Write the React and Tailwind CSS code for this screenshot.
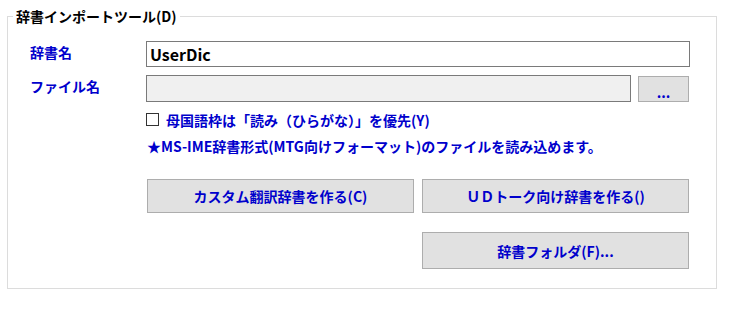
import React from "react";

const font = { fontFamily: '"Noto Sans CJK JP", "Noto Sans", sans-serif' };

function Btn({ children, className = "" }) {
  return (
    <button
      className={`flex items-center justify-center bg-[#e1e1e1] border border-[#adadad] text-[#0000cc] font-bold text-[14px] leading-none ${className}`}
    >
      {children}
    </button>
  );
}

export default function App() {
  return (
    <div className="w-[740px] h-[314px] bg-white relative overflow-hidden" style={font}>
      <fieldset className="ml-[7px] mt-[6px] w-[710px] h-[283px] border border-[#dcdcdc] px-0 pb-0">
        <legend className="ml-[5px] px-[3px] text-[14px] leading-[20px] font-bold text-black">
          辞書インポートツール(D)
        </legend>
        <div className="pl-[22px] pt-[15px] flex flex-col">
          <div className="flex items-start h-[26px]">
            <div className="w-[116px] text-[14px] font-bold text-[#0000cc] leading-[20px] mt-[1px]">辞書名</div>
            <div className="w-[544px] h-[26px] border border-[#7a7a7a] bg-white flex items-center pl-[3px] text-[16px] font-bold text-black">
              UserDic
            </div>
          </div>
          <div className="flex items-start mt-[8px] h-[27px]">
            <div className="w-[116px] text-[14px] font-bold text-[#0000cc] leading-[20px] mt-[1px]">ファイル名</div>
            <div className="w-[485px] h-[27px] border border-[#7a7a7a] bg-[#f0f0f0]"></div>
            <Btn className="ml-[7px] mt-[1px] w-[51px] h-[26px] pt-[6px]">...</Btn>
          </div>
          <div className="flex items-center mt-[11px] ml-[116px] h-[13px]">
            <div className="w-[13px] h-[13px] border border-[#333333] bg-white"></div>
            <div className="ml-[7px] text-[14px] font-bold text-[#0000cc] leading-[20px]">
              母国語枠は「読み（ひらがな）」を優先(Y)
            </div>
          </div>
          <div className="mt-[11px] ml-[117px] text-[14px] font-bold text-[#0000cc] leading-[18px]">
            ★MS-IME辞書形式(MTG向けフォーマット)のファイルを読み込めます。
          </div>
          <div className="flex mt-[24px] ml-[117px] gap-[8px]">
            <Btn className="w-[267px] h-[34px]">カスタム翻訳辞書を作る(C)</Btn>
            <Btn className="w-[267px] h-[34px]">ＵＤトーク向け辞書を作る()</Btn>
          </div>
          <div className="flex mt-[19px] ml-[392px]">
            <Btn className="w-[267px] h-[37px]">辞書フォルダ(F)...</Btn>
          </div>
        </div>
      </fieldset>
    </div>
  );
}
